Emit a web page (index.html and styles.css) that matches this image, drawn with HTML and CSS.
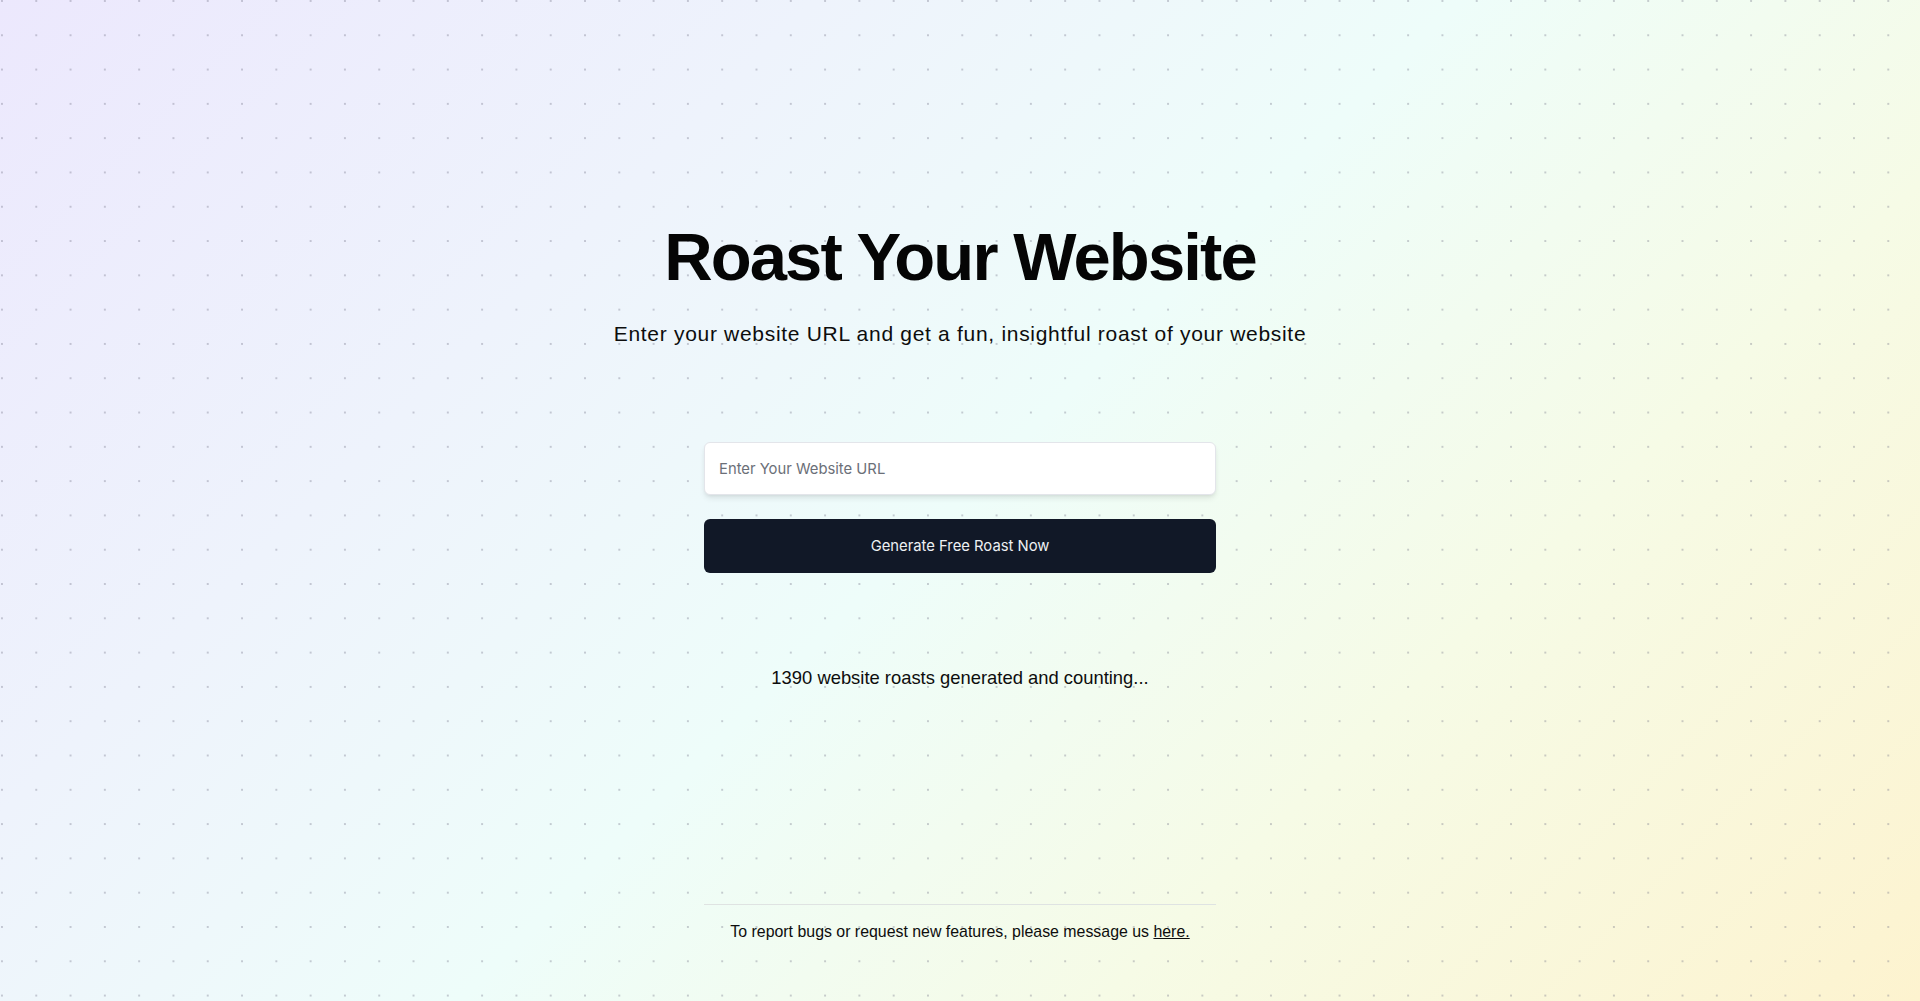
FILE: index.html
```html
<!DOCTYPE html>
<html lang="en">
<head>
<meta charset="utf-8">
<title>Roast Your Website</title>
<link rel="stylesheet" href="styles.css">
</head>
<body>
<div class="page">
  <main class="hero">
    <h1 class="title">Roast Your Website</h1>
    <p class="subtitle">Enter your website URL and get a fun, insightful roast of your website</p>
    <form class="roast-form">
      <input class="url-input" type="text" placeholder="Enter Your Website URL">
      <button class="roast-btn" type="button">Generate Free Roast Now</button>
    </form>
    <p class="counter">1390 website roasts generated and counting...</p>
    <footer class="footer">
      <p class="footer-text">To report bugs or request new features, please message us <a class="footer-link" href="#">here.</a></p>
    </footer>
  </main>
</div>
</body>
</html>
```

FILE: styles.css
```css
html, body {
  margin: 0;
  padding: 0;
  height: 100%;
}

body {
  font-family: "Liberation Sans", Arial, sans-serif;
  color: #0b0b0b;
  background-color: #eef6fb;
  background-image: linear-gradient(135deg, #ece8fd 0%, #eef3fc 28%, #eefdfa 50%, #f6fbe6 72%, #fdf3cf 100%);
  overflow: hidden;
}

.page {
  min-height: 100vh;
  background-image: radial-gradient(circle at 2px 2px, rgba(110, 110, 130, 0.34) 0.9px, rgba(110, 110, 130, 0) 1.5px);
  background-size: 34.3px 34.3px;
  background-position: 0 -1px;
}

.hero {
  display: flex;
  flex-direction: column;
  align-items: center;
  padding-top: 223px;
}

.title {
  margin: 0;
  font-size: 67px;
  line-height: 67px;
  font-weight: 700;
  letter-spacing: -0.028em;
  color: #050505;
}

.subtitle {
  margin: 29px 0 0;
  font-size: 21px;
  line-height: 29px;
  letter-spacing: 0.7px;
  color: #0d0d0d;
}

.roast-form {
  margin-top: 94px;
  width: 512px;
  display: flex;
  flex-direction: column;
  gap: 24px;
}

.url-input {
  box-sizing: border-box;
  width: 100%;
  height: 53px;
  padding: 0 14px;
  border: 1px solid #e3e5ea;
  border-radius: 6px;
  background: #ffffff;
  font-family: Inter, "Noto Sans", sans-serif;
  font-size: 14.8px;
  color: #111827;
  box-shadow: 0 4px 6px -1px rgba(0, 0, 0, 0.09), 0 2px 4px -2px rgba(0, 0, 0, 0.09);
  outline: none;
}

.url-input::placeholder {
  color: #6b6f78;
}

.roast-btn {
  width: 100%;
  height: 54px;
  border: 0;
  border-radius: 6px;
  background: #111827;
  color: #eef0f3;
  font-family: Inter, "Noto Sans", sans-serif;
  font-size: 14.8px;
  font-weight: 400;
  cursor: pointer;
}

.counter {
  margin: 91px 0 0;
  font-size: 18.4px;
  line-height: 28px;
  color: #0d0d0d;
}

.footer {
  margin-top: 212px;
  width: 512px;
  border-top: 1px solid #dfe3e2;
  padding-top: 15px;
  display: flex;
  justify-content: center;
}

.footer-text {
  margin: 0;
  font-size: 15.9px;
  line-height: 24px;
  color: #0d0d0d;
}

.footer-link {
  color: inherit;
  text-decoration: underline;
}
```
